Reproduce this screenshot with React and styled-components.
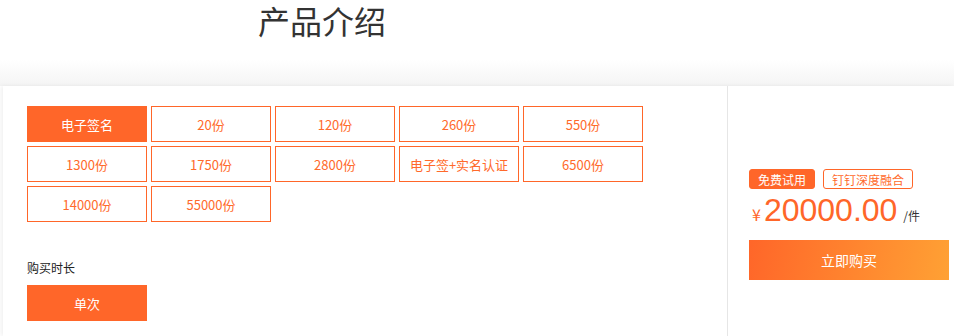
import React from 'react';
import styled, { createGlobalStyle } from 'styled-components';

const Global = createGlobalStyle`
  body {
    margin: 0;
    background: #fff;
    font-family: "Noto Sans CJK SC", "Liberation Sans", sans-serif;
  }
`;

const specs = [
  '电子签名', '20份', '120份', '260份', '550份',
  '1300份', '1750份', '2800份', '电子签+实名认证', '6500份',
  '14000份', '55000份',
];

function App() {
  return (
    <Page>
      <Global />
      <Header>
        <Title>产品介绍</Title>
      </Header>
      <Card>
        <Left>
          <SpecGrid>
            {specs.map((s, i) => (
              <Option key={s} active={i === 0}>{s}</Option>
            ))}
          </SpecGrid>
          <Label>购买时长</Label>
          <Option active>单次</Option>
        </Left>
        <Right>
          <Tags>
            <Tag filled>免费试用</Tag>
            <Tag>钉钉深度融合</Tag>
          </Tags>
          <PriceRow>
            <Yen>¥</Yen>
            <Amount>20000.00</Amount>
            <Unit>/件</Unit>
          </PriceRow>
          <BuyButton>立即购买</BuyButton>
        </Right>
      </Card>
    </Page>
  );
}

export default App;

const Page = styled.div`
  width: 954px;
  height: 336px;
  overflow: hidden;
`;

const Header = styled.div`
  height: 86px;
  padding: 1px 0 0 258px;
  box-sizing: border-box;
  background: linear-gradient(to bottom, #fff 0, #fff 60px, #f4f4f4 86px);
`;

const Title = styled.h1`
  margin: 0;
  font-size: 32px;
  line-height: 38px;
  font-weight: normal;
  color: #333;
`;

const Card = styled.div`
  display: flex;
  height: 250px;
  margin-left: 3px;
  background: #fff;
  box-shadow: -2px 0 4px rgba(0, 0, 0, 0.06);
`;

const Left = styled.div`
  width: 724px;
  padding: 20px 0 0 24px;
  box-sizing: border-box;
`;

const SpecGrid = styled.div`
  display: grid;
  grid-template-columns: repeat(5, 120px);
  grid-auto-rows: 36px;
  gap: 4px;
`;

const Option = styled.div`
  width: 120px;
  height: 36px;
  box-sizing: border-box;
  display: flex;
  align-items: center;
  justify-content: center;
  font-size: 13px;
  color: ${p => (p.active ? '#fff' : '#ff6a2b')};
  background: ${p => (p.active ? '#ff6629' : '#fff')};
  border: 1px solid #ff6629;
  white-space: nowrap;
`;

const Label = styled.div`
  margin: 37px 0 8px;
  font-size: 12px;
  line-height: 18px;
  color: #222;
`;

const Right = styled.div`
  flex: 1;
  border-left: 1px solid #e6e6e6;
  padding: 83px 0 0 21px;
`;

const Tags = styled.div`
  display: flex;
  gap: 8px;
`;

const Tag = styled.span`
  height: 20px;
  box-sizing: border-box;
  padding: 0 8px;
  display: flex;
  align-items: center;
  font-size: 12px;
  border-radius: 3px;
  border: 1px solid #ff6629;
  color: ${p => (p.filled ? '#fff' : '#ff6a2b')};
  background: ${p => (p.filled ? '#ff6629' : '#fff')};
`;

const PriceRow = styled.div`
  display: flex;
  align-items: baseline;
  margin-top: 3px;
  height: 36px;
  color: #ff6629;
`;

const Yen = styled.span`
  font-size: 16px;
  margin: 0 3px 0 3px;
`;

const Amount = styled.span`
  font-family: "Liberation Sans", sans-serif;
  font-size: 32px;
  line-height: 36px;
`;

const Unit = styled.span`
  font-size: 12px;
  color: #333;
  margin-left: 6px;
`;

const BuyButton = styled.div`
  width: 200px;
  height: 40px;
  margin-top: 12px;
  display: flex;
  align-items: center;
  justify-content: center;
  font-size: 14px;
  color: #fff;
  background: linear-gradient(100deg, #ff6629 0%, #ffa134 100%);
`;
